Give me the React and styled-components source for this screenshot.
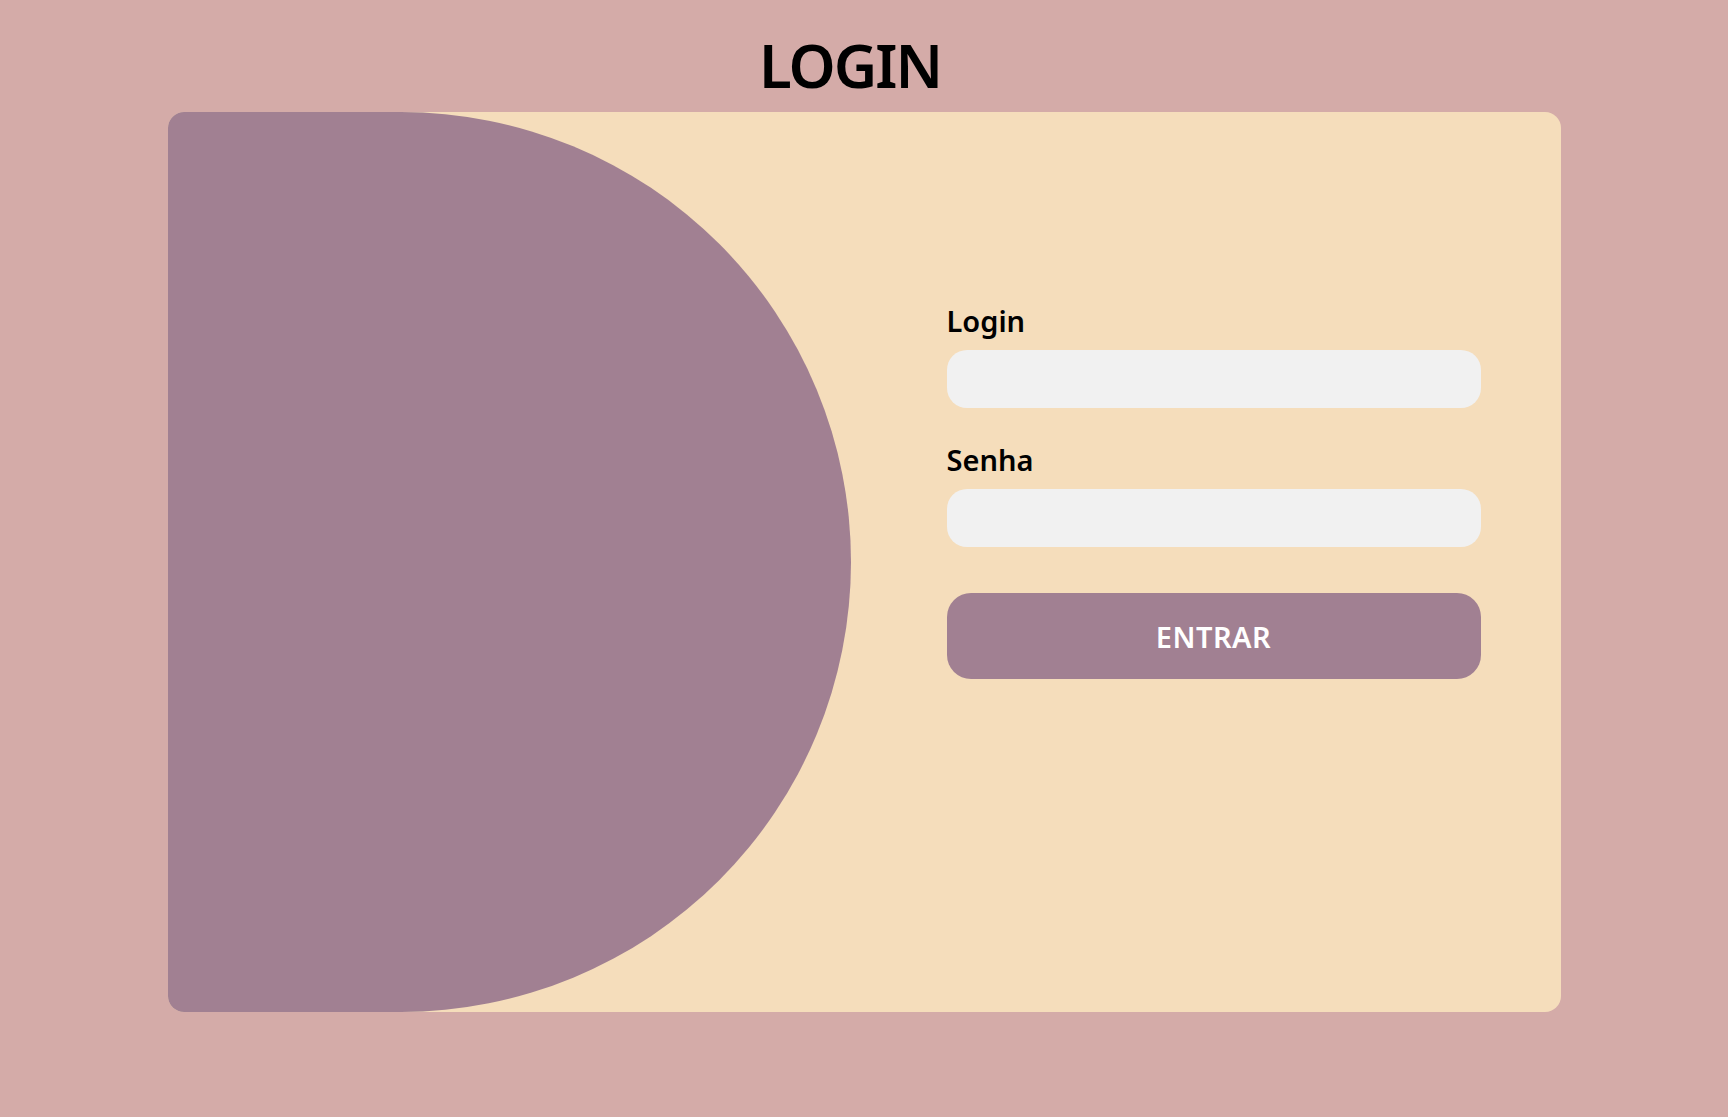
import styled, { createGlobalStyle } from "styled-components";

const GlobalStyle = createGlobalStyle`
  body {
    margin: 0;
    background-color: #d4aba8;
    font-family: "Noto Sans", "Open Sans", sans-serif;
  }
`;

const Page = styled.main`
  min-height: 100vh;
  padding-top: 36px;
  box-sizing: border-box;
`;

const Title = styled.h1`
  margin: 0;
  padding-right: 28px;
  font-size: 60px;
  line-height: 58px;
  font-weight: 600;
  letter-spacing: -2px;
  text-align: center;
  color: #000;
`;

const Card = styled.section`
  display: flex;
  width: 1393px;
  height: 900px;
  margin: 18px auto 0;
  background-color: #f5ddbb;
  border-radius: 16px;
  overflow: hidden;
`;

const Shape = styled.div`
  flex-shrink: 0;
  width: 683px;
  height: 100%;
  background-color: #a18092;
  border-radius: 0 450px 450px 0;
`;

const Form = styled.form`
  display: flex;
  flex-direction: column;
  width: 534px;
  margin-left: 96px;
  padding-top: 192px;
`;

const Label = styled.label`
  margin-top: ${(props) => props.$gap || 0}px;
  margin-bottom: 12px;
  font-size: 29px;
  line-height: 34px;
  font-weight: 600;
  color: #000;
`;

const Input = styled.input`
  height: 58px;
  padding: 0 20px;
  border: none;
  border-radius: 20px;
  background-color: #f1f1f1;
  font-family: inherit;
  font-size: 20px;
  outline: none;
`;

const Button = styled.button`
  height: 86px;
  margin-top: 46px;
  border: none;
  border-radius: 24px;
  background-color: #a18092;
  color: #fff;
  font-family: inherit;
  font-size: 29px;
  font-weight: 600;
  letter-spacing: 0.5px;
  cursor: pointer;
`;

export default function App() {
  return (
    <Page>
      <GlobalStyle />
      <Title>LOGIN</Title>
      <Card>
        <Shape />
        <Form onSubmit={(e) => e.preventDefault()}>
          <Label htmlFor="login">Login</Label>
          <Input id="login" type="text" />
          <Label htmlFor="senha" $gap={35}>
            Senha
          </Label>
          <Input id="senha" type="password" />
          <Button type="submit">ENTRAR</Button>
        </Form>
      </Card>
    </Page>
  );
}
